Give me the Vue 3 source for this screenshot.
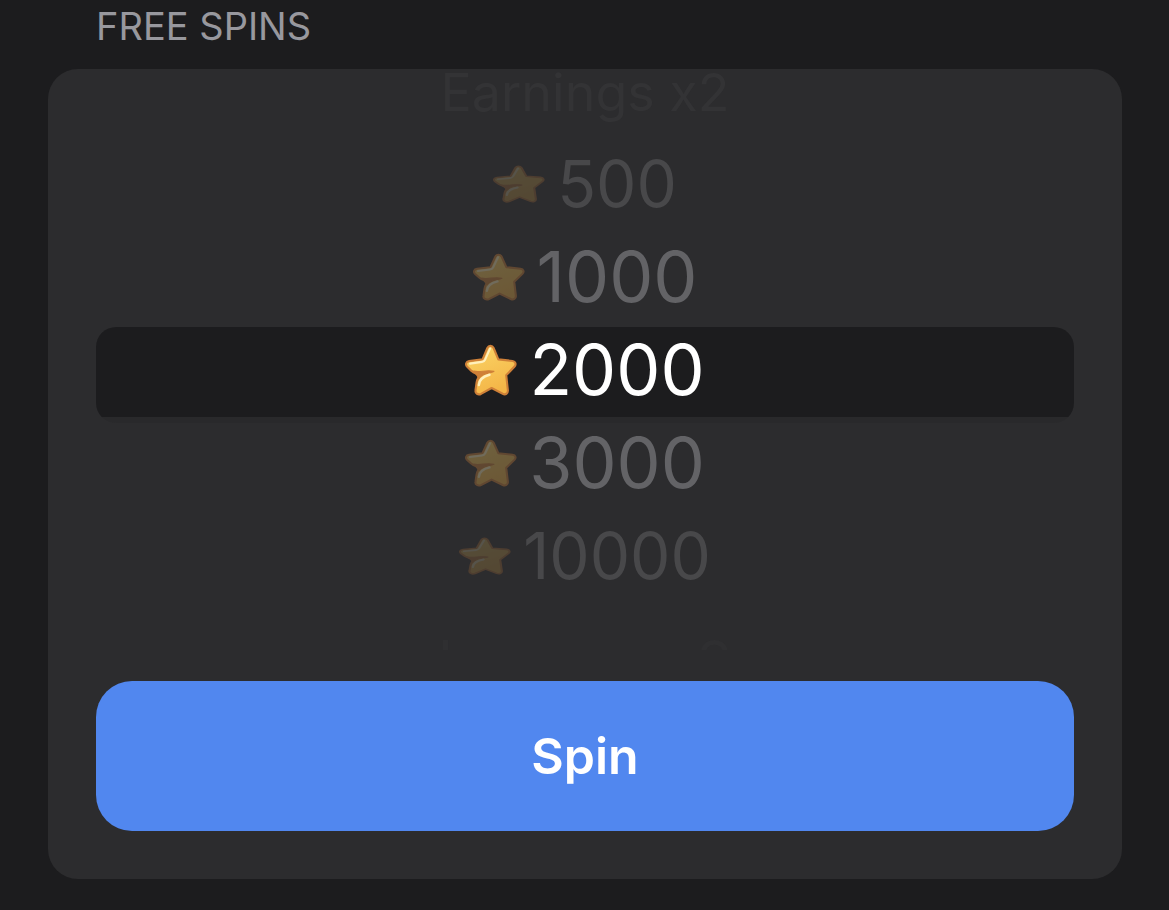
<script setup>
import { ref } from 'vue'

const rows = [
  { text: 'Earnings x2', tone: 'edge' },
  { text: '500', tone: 'far', star: true },
  { text: '1000', tone: 'near', star: true },
  { text: '2000', tone: 'current', star: true },
  { text: '3000', tone: 'near', star: true },
  { text: '10000', tone: 'far', star: true },
  { text: 'Income x2', tone: 'last' }
]
const selected = ref(3)
</script>

<template>
  <main class="page">
    <h1 class="heading">FREE SPINS</h1>
    <section class="panel">
      <div class="wheel">
        <div class="marker"></div>
        <ul class="rows" role="listbox" aria-label="Free spins">
          <li
            v-for="(row, i) in rows"
            :key="i"
            class="row"
            :class="row.tone"
            role="option"
            :aria-selected="i === selected"
          >
            <svg v-if="row.star" class="star" viewBox="0 0 54 52" preserveAspectRatio="none" aria-hidden="true">
              <defs>
                <linearGradient :id="'gold' + i" x1="0" y1="0" x2="0.4" y2="1">
                  <stop offset="0" stop-color="#fbd667" />
                  <stop offset="1" stop-color="#f4b648" />
                </linearGradient>
              </defs>
              <path
                d="M23.2 4C24.6 1.1 28.3 1.1 29.7 4L34.6 15.4L49.4 17C52.6 17.4 53.4 20.5 51.3 22.6L42.8 31.2L44.5 46.2C44.8 49.5 42 51.1 39.2 49.8L27.6 44L16.6 49.9C13.6 51.3 10.3 49.5 10.9 46.2L12 38.6C12.6 35 14 32.5 16.8 30.4C12.6 30.4 9 28.8 6.4 26.6L2.3 22.8C.1 20.6 1 17.5 4.2 17.1L18.2 15.4Z"
                :fill="'url(#gold' + i + ')'"
                stroke="#cf8038"
                stroke-width="2.2"
                stroke-linejoin="round"
              />
              <path d="M9 27.2C16 29.2 22 25.2 30 27.4C25 29.6 18.6 28.4 14.6 34.5L12.6 31.6Z" fill="#cf8038" stroke="#cf8038" stroke-width="1.2" stroke-linejoin="round" />
              <path d="M26 4.6L21 15.4C20.2 17 19.6 17.6 17.6 17.9L5.2 19.6" fill="none" stroke="#fff0bd" stroke-width="2.2" stroke-linecap="round" stroke-linejoin="round" />
              <path d="M14.4 41C14.8 36 18.2 32.6 25.4 30.8" fill="none" stroke="#fff0bd" stroke-width="2.6" stroke-linecap="round" />
            </svg>
            <span>{{ row.text }}</span>
          </li>
        </ul>
      </div>
      <button class="spin" type="button">Spin</button>
    </section>
  </main>
</template>

<style>
body {
  margin: 0;
  background: #1c1c1e;
}
</style>

<style scoped>
.page {
  box-sizing: border-box;
  min-height: 100vh;
  padding: 0 47px 31px 48px;
  background: #1c1c1e;
  color: #fff;
  font-family: Inter, "Liberation Sans", sans-serif;
}
.heading {
  margin: 0;
  padding: 2px 48px 19px;
  color: #98989e;
  font-size: 38px;
  font-weight: 400;
  line-height: 48px;
}
.panel {
  padding: 0 48px 48px;
  border-radius: 30px;
  background: #2c2c2e;
}
.wheel {
  position: relative;
  margin-bottom: 31px;
}
.marker {
  position: absolute;
  top: 258px;
  left: 0;
  right: 0;
  height: 96px;
  border-radius: 20px;
  background: linear-gradient(#1c1c1e 90px, #29292b 90px);
}
.rows {
  position: relative;
  margin: 0;
  padding: 0;
  list-style: none;
}
.row {
  display: flex;
  align-items: center;
  justify-content: center;
  gap: 12px;
  height: 93px;
  font-size: 70px;
  line-height: 92px;
  white-space: nowrap;
}
.star {
  flex: none;
  width: 52px;
  height: 52px;
}
.near {
  color: #636366;
}
.near .star {
  height: 48px;
  opacity: 0.32;
}
.far {
  color: #48484a;
  font-size: 64px;
}
.far .star {
  height: 38px;
  opacity: 0.2;
}
.edge {
  align-items: flex-start;
  height: 68px;
  color: #333335;
  font-size: 52px;
  line-height: 48px;
}
.last {
  box-sizing: border-box;
  align-items: flex-start;
  height: 48px;
  padding-top: 24px;
  overflow: hidden;
  color: #2f2f31;
  font-size: 60px;
  line-height: 72px;
}
.spin {
  display: block;
  width: 100%;
  height: 150px;
  border: 0;
  border-radius: 36px;
  background: #5187ef;
  color: #fff;
  font-family: inherit;
  font-size: 50px;
  font-weight: 600;
  line-height: 60px;
  cursor: pointer;
}
</style>
